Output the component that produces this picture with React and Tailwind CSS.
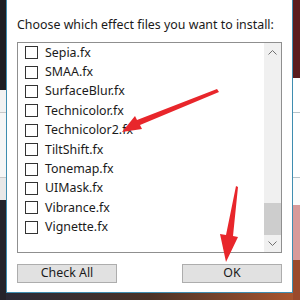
import React from 'react';

const files = [
  'Sepia.fx',
  'SMAA.fx',
  'SurfaceBlur.fx',
  'Technicolor.fx',
  'Technicolor2.fx',
  'TiltShift.fx',
  'Tonemap.fx',
  'UIMask.fx',
  'Vibrance.fx',
  'Vignette.fx',
];

function Chevron({ down }) {
  return (
    <svg width="9" height="6" viewBox="0 0 9 6" className="block">
      <polyline
        points={down ? '0.5,0.5 4.5,4.5 8.5,0.5' : '0.5,5.5 4.5,1.5 8.5,5.5'}
        fill="none"
        stroke="#707070"
        strokeWidth="1"
      />
    </svg>
  );
}

function Arrows() {
  return (
    <svg width="300" height="300" viewBox="0 0 300 300" className="absolute inset-0 pointer-events-none">
      {/* arrow to Technicolor2 */}
      <polygon points="217,89 219,92 140,125 142,129 122,132 135,116 137,120" fill="#e8262b" />
      {/* arrow to OK */}
      <polygon points="236,186 238,187 233,236 238,237 226,262 220,234 226,235" fill="#e8262b" />
    </svg>
  );
}

export default function App() {
  return (
    <div className="relative w-[300px] h-[300px] overflow-hidden flex bg-[#2a2428]" style={{ fontFamily: '"Noto Sans", "Open Sans", sans-serif' }}>
      {/* left backdrop */}
      <div className="w-[6px] flex flex-col">
        <div className="h-[90px] bg-[#1e1d22]" />
        <div className="h-[23px] bg-[#f2f2f2] border-b border-[#c8c8c8]" />
        <div className="h-[65px] bg-[#f6f6f6] border-b border-[#c8c8c8]" />
        <div className="h-[22px] bg-[#e8e8e8]" />
        <div className="flex-1 bg-[#25232a]" />
      </div>

      {/* dialog column */}
      <div className="w-[287px] flex flex-col">
        <div className="h-[293px] bg-white border-x border-b border-[#3f8db0] pl-[10px] pr-[10px] pt-[16px] flex flex-col text-[12.4px] text-[#1a1a1a]">
          <div className="h-[18px] leading-[18px] whitespace-nowrap">Choose which effect files you want to install:</div>

          <div className="mt-[8px] h-[211px] border border-[#8f8f8f] flex">
            <div className="flex-1 flex flex-col pl-[7px]">
              {files.map((f) => (
                <div key={f} className="h-[19.4px] flex items-center gap-[7px]">
                  <div className="w-[13px] h-[13px] border border-[#333] bg-white shrink-0" />
                  <span className="leading-[18px]">{f}</span>
                </div>
              ))}
            </div>
            <div className="w-[17px] bg-[#f0f0f0] flex flex-col items-center">
              <div className="h-[17px] flex items-center justify-center">
                <Chevron />
              </div>
              <div className="h-[143px]" />
              <div className="w-full h-[32px] bg-[#cdcdcd]" />
              <div className="flex-1 flex items-center justify-center">
                <Chevron down />
              </div>
            </div>
          </div>

          <div className="mt-[11px] flex justify-between">
            <div className="w-[100px] h-[19px] bg-[#e1e1e1] border border-[#adadad] flex items-center justify-center leading-none">Check All</div>
            <div className="w-[100px] h-[19px] bg-[#e1e1e1] border border-[#adadad] flex items-center justify-center leading-none">OK</div>
          </div>
        </div>
        <div className="flex-1 bg-gradient-to-r from-[#2b2a36] via-[#4a3226] to-[#a9552e]" />
      </div>

      {/* right backdrop */}
      <div className="w-[7px] flex flex-col">
        <div className="h-[78px] bg-[#5a1c1e]" />
        <div className="h-[35px] bg-white border-b border-[#b8c4ca]" />
        <div className="h-[65px] bg-white border-b border-[#b8c4ca]" />
        <div className="h-[27px] bg-[#fbfbfb]" />
        <div className="h-[55px] bg-[#d89a9a]" />
        <div className="flex-1 bg-[#9a4a2c]" />
      </div>

      <Arrows />
    </div>
  );
}
